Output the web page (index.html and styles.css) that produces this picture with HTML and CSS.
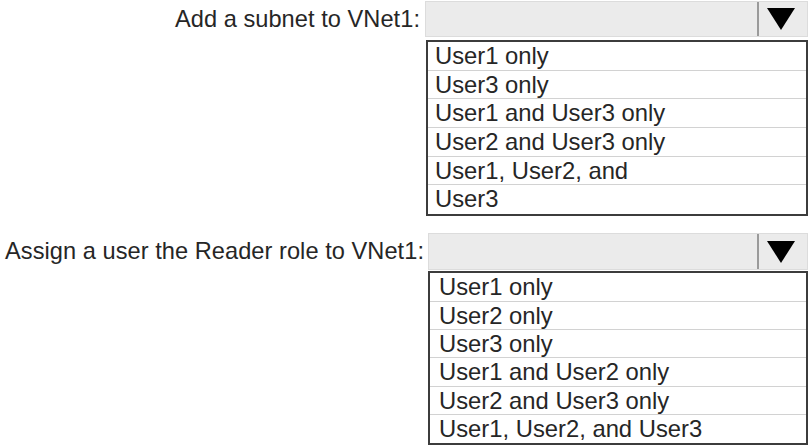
FILE: index.html
```html
<!DOCTYPE html>
<html>
<head>
<meta charset="utf-8">
<link rel="stylesheet" href="styles.css">
</head>
<body>
<div class="page">
  <div class="question q1">
    <div class="label">Add a subnet to VNet1:</div>
    <div class="control">
      <div class="select">
        <div class="value"></div>
        <div class="arrow"><svg width="28" height="22" viewBox="0 0 28 22"><polygon points="0,0 28,0 14,22" fill="#000"/></svg></div>
      </div>
      <ul class="list">
        <li>User1 only</li>
        <li>User3 only</li>
        <li>User1 and User3 only</li>
        <li>User2 and User3 only</li>
        <li>User1, User2, and</li>
        <li>User3</li>
      </ul>
    </div>
  </div>
  <div class="question q2">
    <div class="label">Assign a user the Reader role to VNet1:</div>
    <div class="control">
      <div class="select">
        <div class="value"></div>
        <div class="arrow"><svg width="28" height="22" viewBox="0 0 28 22"><polygon points="0,0 28,0 14,22" fill="#000"/></svg></div>
      </div>
      <ul class="list">
        <li>User1 only</li>
        <li>User2 only</li>
        <li>User3 only</li>
        <li>User1 and User2 only</li>
        <li>User2 and User3 only</li>
        <li>User1, User2, and User3</li>
      </ul>
    </div>
  </div>
</div>
</body>
</html>
```

FILE: styles.css
```css
html, body {
  margin: 0;
  padding: 0;
  background: #ffffff;
}
.page {
  width: 810px;
  height: 448px;
  overflow: hidden;
  font-family: "Liberation Sans", Arial, sans-serif;
  color: #262626;
  padding-top: 1px;
  box-sizing: border-box;
}
.question {
  display: flex;
  align-items: flex-start;
}
.q2 {
  margin-top: 17px;
}
.label {
  font-size: 23.6px;
  height: 37px;
  line-height: 37px;
  text-align: right;
  white-space: nowrap;
  letter-spacing: 0.05px;
}
.q1 .label {
  width: 420px;
  padding-right: 5px;
}
.q2 .label {
  width: 424px;
  padding-right: 4px;
}
.control {
  display: flex;
  flex-direction: column;
}
.q1 .control {
  width: 383px;
}
.q2 .control {
  width: 380px;
}
.select {
  display: flex;
  height: 36px;
  background: #ebebeb;
  border: 1px solid #dcdcdc;
  box-sizing: border-box;
}
.q2 .select {
  height: 37px;
}
.value {
  flex: 1;
}
.arrow {
  width: 50px;
  border-left: 2px solid #9a9a9a;
  display: flex;
  align-items: center;
  justify-content: center;
  padding-right: 5px;
  box-sizing: border-box;
}
.list {
  list-style: none;
  margin: 3px 0 0 1px;
  padding: 0;
  border: 2px solid #3c3c3c;
  background: #fff;
}
.q2 .list {
  margin-top: 1px;
  margin-left: 0;
}
.list li {
  height: 28.7px;
  line-height: 27px;
  font-size: 23.8px;
  padding-left: 7px;
  border-bottom: 1px solid #d2d2d2;
  box-sizing: border-box;
  white-space: nowrap;
}
.q2 .list li {
  height: 28.4px;
  padding-left: 9px;
}
.list li:last-child {
  border-bottom: none;
}
```
